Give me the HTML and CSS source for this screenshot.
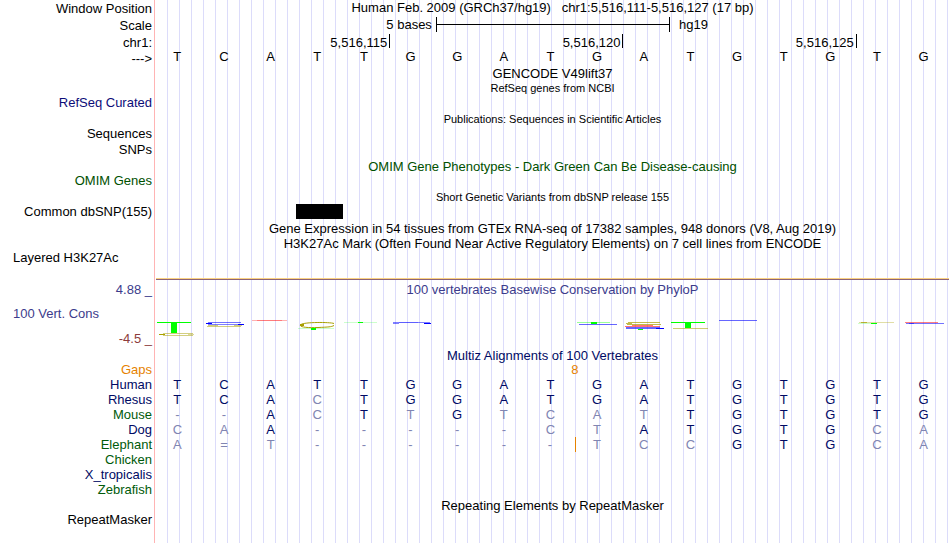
FILE: index.html
```html
<!DOCTYPE html>
<html lang="en">

<head>
    <meta charset="UTF-8">
    <meta name="viewport" content="width=device-width, initial-scale=1.0">
    <title>Genome Browser - chr1:5,516,111-5,516,127</title>
    <link rel="stylesheet" href="styles.css">
</head>

<body>
    <main class="tracks">
        <!-- ruler -->
        <div class="row position">
            <div class="label">Window Position</div>
            <div class="center">Human Feb. 2009 (GRCh37/hg19) &nbsp; chr1:5,516,111-5,516,127 (17 bp)</div>
        </div>
        <div class="row scale">
            <div class="label">Scale</div>
            <div class="bases">
                <span class="scale-size">5 bases</span>
                <span class="scale-bar"></span>
                <span class="scale-db">hg19</span>
            </div>
        </div>
        <div class="row coords">
            <div class="label">chr1:</div>
            <div class="bases">
                <span class="tick">5,516,115</span>
                <span class="tick">5,516,120</span>
                <span class="tick">5,516,125</span>
            </div>
        </div>
        <div class="row strand">
            <div class="label">---&gt;</div>
            <div class="bases sequence">
                <span>T</span><span>C</span><span>A</span><span>T</span><span>T</span><span>G</span><span>G</span><span>A</span><span>T</span><span>G</span><span>A</span><span>T</span><span>G</span><span>T</span><span>G</span><span>T</span><span>G</span>
            </div>
        </div>

        <!-- genes and variants -->
        <div class="row"><div class="center">GENCODE V49lift37</div></div>
        <div class="row title first small"><div class="center">RefSeq genes from NCBI</div></div>
        <div class="row"><div class="label refseq">RefSeq Curated</div></div>
        <div class="row title small"><div class="center">Publications: Sequences in Scientific Articles</div></div>
        <div class="row"><div class="label">Sequences</div></div>
        <div class="row snps"><div class="label">SNPs</div></div>
        <div class="row title omim"><div class="center">OMIM Gene Phenotypes - Dark Green Can Be Disease-causing</div></div>
        <div class="row"><div class="label omim">OMIM Genes</div></div>
        <div class="row title small"><div class="center">Short Genetic Variants from dbSNP release 155</div></div>
        <div class="row">
            <div class="label">Common dbSNP(155)</div>
            <div class="bases"><span class="variant"></span></div>
        </div>

        <!-- expression and regulation -->
        <div class="row gtex"><div class="center">Gene Expression in 54 tissues from GTEx RNA-seq of 17382 samples, 948 donors (V8, Aug 2019)</div></div>
        <div class="row title first"><div class="center">H3K27Ac Mark (Often Found Near Active Regulatory Elements) on 7 cell lines from ENCODE</div></div>
        <div class="row"><div class="label left">Layered H3K27Ac</div></div>
        <div class="signal"></div>

        <!-- conservation -->
        <div class="row cons-title">
            <div class="label">4.88 _</div>
            <div class="center">100 vertebrates Basewise Conservation by PhyloP</div>
        </div>
        <div class="row cons">
            <div class="cons-labels">
                <div class="label left">100 Vert. Cons</div>
                <div class="label low">-4.5 _</div>
            </div>
            <svg class="logo" viewBox="156 297 793 50" preserveAspectRatio="none" aria-hidden="true">
                <g fill="none" stroke="#a8a000">
                    <path d="M163 333.500H193M163 335.500H193" opacity=".5" />
                    <path d="M159 334.500H165" />
                    <path d="M188 334.500H194" opacity=".4" />
                    <path d="M207 326.500H241" opacity=".5" />
                    <path d="M208 325.500H218M234 325.500H242" opacity=".5" />
                    <path d="M334 323.500C330 322 304 322 301 324.500S307 328 318 327.500S331 327 334 325.500" />
                    <path d="M300 325H304" stroke-width="2" />
                    <path d="M628 322.500H660M626 323.500H632M627 324.500H661" opacity=".7" />
                    <path d="M673 328.500H708" opacity=".55" />
                    <path d="M859 322.500H894" opacity=".35" />
                    <path d="M861 322.500H867" opacity=".7" />
                </g>
                <g fill="#00ff00">
                    <rect x="157" y="322" width="34" height="1" />
                    <rect x="171" y="323" width="6" height="10" />
                    <rect x="298" y="328" width="36" height="1" opacity=".2" />
                    <rect x="311" y="328" width="5" height="2" />
                    <rect x="344" y="322" width="33" height="1" opacity=".2" />
                    <rect x="358" y="322" width="5" height="1" />
                    <rect x="577" y="322" width="33" height="1" opacity=".4" />
                    <rect x="591" y="322" width="6" height="2" />
                    <rect x="638" y="329" width="5" height="1" />
                    <rect x="671" y="322" width="34" height="1" />
                    <rect x="685" y="322" width="6" height="6" />
                    <rect x="858" y="323" width="14" height="1" opacity=".2" />
                    <rect x="871" y="323" width="6" height="1" />
                </g>
                <g fill="none" stroke="#ff0000">
                    <path d="M252 320.500H287" opacity=".3" />
                    <path d="M257 320.500H282" opacity=".3" />
                    <path d="M632 325.500H653M625 326.500H660" opacity=".55" />
                    <path d="M905 322.500H938" opacity=".5" />
                </g>
                <g fill="none" stroke="#0000ff">
                    <path d="M208 322.500H241" opacity=".55" />
                    <path d="M206 323.500H212M238 324.500H244" />
                    <path d="M208 324.500H240" opacity=".5" />
                    <path d="M393 322.500H430M393 323.500H399" opacity=".5" />
                    <path d="M399 322.500H418" opacity=".25" />
                    <path d="M424 323.500H431" />
                    <path d="M579 324.500H617" opacity=".6" />
                    <path d="M626 327.500H660M626 328.500H658" opacity=".6" />
                    <path d="M656 328.500H664" />
                    <path d="M719 320.500H757" opacity=".6" />
                    <path d="M906 323.500H944" opacity=".55" />
                    <path d="M909 323.500H914" opacity=".5" />
                </g>
            </svg>
        </div>

        <!-- alignment -->
        <div class="row title first multiz"><div class="center">Multiz Alignments of 100 Vertebrates</div></div>
        <div class="row gaps">
            <div class="label">Gaps</div>
            <div class="bases"><span class="gap-size">8</span></div>
        </div>
        <table class="alignment">
            <tr>
                <th scope="row">Human</th>
                <td>T</td><td>C</td><td>A</td><td>T</td><td>T</td><td>G</td><td>G</td><td>A</td><td>T</td><td>G</td><td>A</td><td>T</td><td>G</td><td>T</td><td>G</td><td>T</td><td>G</td>
            </tr>
            <tr>
                <th scope="row">Rhesus</th>
                <td>T</td><td>C</td><td>A</td><td class="diff">C</td><td>T</td><td>G</td><td>G</td><td>A</td><td>T</td><td>G</td><td>A</td><td>T</td><td>G</td><td>T</td><td>G</td><td>T</td><td>G</td>
            </tr>
            <tr>
                <th scope="row" class="alt">Mouse</th>
                <td class="diff">-</td><td class="diff">-</td><td>A</td><td class="diff">C</td><td>T</td><td class="diff">T</td><td>G</td><td class="diff">T</td><td class="diff">C</td><td class="diff">A</td><td class="diff">T</td><td>T</td><td>G</td><td>T</td><td>G</td><td>T</td><td>G</td>
            </tr>
            <tr>
                <th scope="row">Dog</th>
                <td class="diff">C</td><td class="diff">A</td><td>A</td><td class="diff">-</td><td class="diff">-</td><td class="diff">-</td><td class="diff">-</td><td class="diff">-</td><td class="diff">C</td><td class="diff">T</td><td>A</td><td>T</td><td>G</td><td>T</td><td>G</td><td class="diff">C</td><td class="diff">A</td>
            </tr>
            <tr>
                <th scope="row" class="alt">Elephant</th>
                <td class="diff">A</td><td class="diff">=</td><td class="diff">T</td><td class="diff">-</td><td class="diff">-</td><td class="diff">-</td><td class="diff">-</td><td class="diff">-</td><td class="diff insert">-</td><td class="diff">T</td><td class="diff">C</td><td class="diff">C</td><td>G</td><td>T</td><td>G</td><td class="diff">C</td><td class="diff">A</td>
            </tr>
            <tr>
                <th scope="row" class="alt">Chicken</th>
                <td colspan="17"></td>
            </tr>
            <tr>
                <th scope="row">X_tropicalis</th>
                <td colspan="17"></td>
            </tr>
            <tr>
                <th scope="row" class="alt">Zebrafish</th>
                <td colspan="17"></td>
            </tr>
        </table>

        <div class="row title repeats"><div class="center">Repeating Elements by RepeatMasker</div></div>
        <div class="row"><div class="label">RepeatMasker</div></div>
    </main>
</body>

</html>
```
FILE: styles.css
```css
* {
    box-sizing: border-box;
}

body {
    margin: 0;
    font-family: "Liberation Sans", Arial, Helvetica, sans-serif;
    font-size: 13px;
    line-height: 15px;
    color: #000;
    background-color: #fff;
}

/* pink divider after the labels, then a guide line every 12px */
.tracks {
    min-height: 100vh;
    padding-right: 1px;
    background-image:
        linear-gradient(to right, #fff 154px, #ffb4b4 154px, #ffb4b4 155px, #fff 155px, #fff 156px, transparent 156px),
        repeating-linear-gradient(to right, transparent 0, transparent 11px, #dcdcfa 11px, #dcdcfa 12px);
}

.row {
    display: grid;
    grid-template-columns: 156px 1fr;
    height: 15px;
}

.label {
    grid-column: 1;
    padding-right: 4px;
    text-align: right;
    white-space: nowrap;
}

.label.left {
    padding-left: 13px;
    text-align: left;
}

.center {
    grid-column: 2;
    text-align: center;
    white-space: nowrap;
}

.bases {
    grid-column: 2;
    display: grid;
    grid-template-columns: repeat(17, 1fr);
}

.title {
    height: 14px;
    margin-top: 2px;
}

.title.first {
    margin-top: 0;
}

.small {
    font-size: 11px;
}

/* ruler */
.position {
    height: 16px;
}

.position .label,
.coords .label,
.strand .label {
    line-height: 18px;
}

.scale {
    height: 18px;
}

.scale .label {
    line-height: 20px;
}

.scale-size {
    grid-column: 1 / 7;
    padding: 1px 4px 0 0;
    text-align: right;
}

.scale-bar {
    grid-column: 7 / 12;
    height: 15px;
    margin: 1px -1px 0 0;
    border: solid #000;
    border-width: 0 1px;
    background: linear-gradient(#000, #000) 0 7px / 100% 1px no-repeat;
}

.scale-db {
    grid-column: 12 / 18;
    padding: 1px 0 0 10px;
}

.coords {
    height: 16px;
}

.tick {
    grid-column: span 5;
    height: 14px;
    margin-right: -1px;
    padding-right: 2px;
    border-right: 1px solid #000;
    line-height: 18px;
    text-align: right;
}

.strand {
    height: 16px;
}

.sequence {
    line-height: 13px;
}

.sequence span {
    padding-right: 4px;
    text-align: center;
}

/* genes and variants */
.refseq {
    color: #0c0c78;
}

.omim {
    color: #005000;
}

.snps {
    margin-top: 1px;
}

.variant {
    grid-column: 4;
    background-color: #000;
}

.gtex {
    margin-top: 2px;
}

.signal {
    height: 2px;
    margin: 13px 0 2px 156px;
    border-top: 1px solid #fad282;
    background-color: #8c6478;
}

/* conservation */
.cons-title,
.cons {
    color: #3c3c8c;
}

.cons {
    height: 50px;
}

.cons-labels {
    display: flex;
    flex-direction: column;
    justify-content: space-between;
    padding: 9px 0 1px;
}

.low {
    color: #8c3c3c;
}

.logo {
    display: block;
    width: 100%;
    height: 50px;
}

/* alignment */
.title.multiz {
    margin-top: 1px;
    color: #000a64;
}

.gaps {
    color: #e68200;
}

.gap-size {
    grid-column: 9 / 11;
    padding-right: 2px;
    text-align: center;
}

.alignment {
    width: 100%;
    table-layout: fixed;
    border-collapse: separate;
    border-spacing: 0;
    color: #000a64;
}

.alignment th {
    width: 156px;
    height: 15px;
    padding: 0 4px 0 0;
    font-weight: normal;
    text-align: right;
}

.alignment td {
    padding: 0 4px 0 0;
    text-align: center;
}

.alignment .alt {
    color: #005a0a;
}

.alignment .diff {
    color: #8085b2;
}

.alignment .insert {
    border-right: 1px solid #e68200;
}

.title.repeats {
    margin-top: 1px;
}
```
